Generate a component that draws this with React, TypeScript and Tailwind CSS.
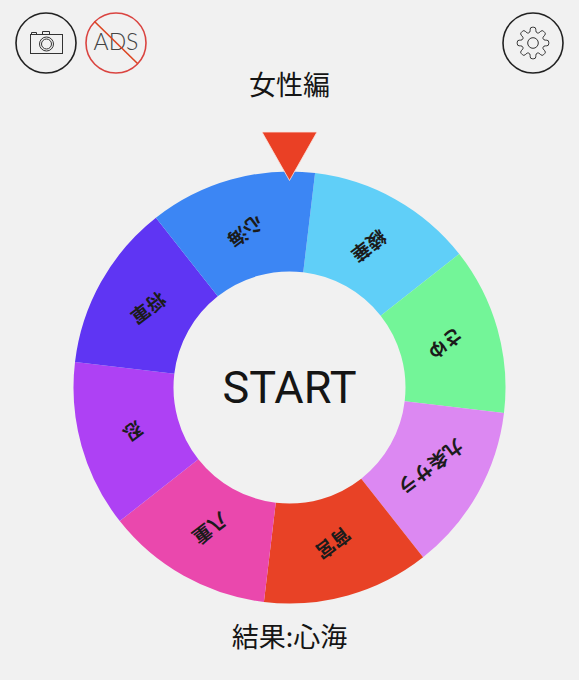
import React from "react";

type Segment = { label: string; color: string };

const SEGMENTS: Segment[] = [
  { label: "綾華", color: "#60cff8" },
  { label: "さゆ", color: "#73f598" },
  { label: "九条サラ", color: "#dc88f2" },
  { label: "宵宮", color: "#e84226" },
  { label: "八重", color: "#ea48ad" },
  { label: "忍", color: "#ae41f4" },
  { label: "将軍", color: "#5f35f3" },
  { label: "心海", color: "#3c86f4" },
];

const OUTER = 216;
const INNER = 116;
const LABEL_RADIUS = 162;
const WHEEL_TURN = 6.8;
const LABEL_TURN = 143;

// Angles are in degrees, clockwise from twelve o'clock.
function polar(radius: number, degrees: number): [number, number] {
  const a = (degrees * Math.PI) / 180;
  return [radius * Math.sin(a), -radius * Math.cos(a)];
}

function ringSlice(from: number, to: number): string {
  const [ax, ay] = polar(OUTER, from);
  const [bx, by] = polar(OUTER, to);
  const [cx, cy] = polar(INNER, to);
  const [dx, dy] = polar(INNER, from);
  return `M${ax} ${ay}A${OUTER} ${OUTER} 0 0 1 ${bx} ${by}L${cx} ${cy}A${INNER} ${INNER} 0 0 0 ${dx} ${dy}Z`;
}

function gearPath(): string {
  const points: [number, number][] = [];
  for (let i = 0; i < 8; i++) {
    const c = i * 45;
    points.push(polar(11, c - 15), polar(16, c - 10), polar(16, c + 10), polar(11, c + 15));
  }
  const toward = (p: [number, number], q: [number, number], d: number) => {
    const len = Math.hypot(q[0] - p[0], q[1] - p[1]);
    const t = Math.min(d / len, 0.5);
    return `${p[0] + (q[0] - p[0]) * t} ${p[1] + (q[1] - p[1]) * t}`;
  };
  const n = points.length;
  return (
    points
      .map((p, i) => {
        const prev = points[(i + n - 1) % n];
        const next = points[(i + 1) % n];
        return `${i === 0 ? "M" : "L"}${toward(p, prev, 2)}Q${p[0]} ${p[1]} ${toward(p, next, 2)}`;
      })
      .join("") + "Z"
  );
}

function RoundButton({ label, children }: { label: string; children: React.ReactNode }) {
  return (
    <button type="button" aria-label={label} className="size-[62px] shrink-0 cursor-pointer rounded-full">
      <svg viewBox="0 0 62 62" className="size-full" fill="none">
        {children}
      </svg>
    </button>
  );
}

function Wheel() {
  return (
    <svg viewBox="-216.5 -216.5 433 433" className="block w-full">
      {SEGMENTS.map((s, i) => (
        <path key={s.label} d={ringSlice(WHEEL_TURN + i * 45, WHEEL_TURN + (i + 1) * 45)} fill={s.color} />
      ))}
      {SEGMENTS.map((s, i) => {
        const [x, y] = polar(LABEL_RADIUS, WHEEL_TURN + i * 45 + 22.5);
        return (
          <text
            key={s.label}
            transform={`translate(${x} ${y}) rotate(${LABEL_TURN})`}
            dy={-1}
            textAnchor="middle"
            dominantBaseline="central"
            className="fill-[#1b1b1b] text-[19px] font-bold"
          >
            {s.label}
          </text>
        );
      })}
    </svg>
  );
}

export default function App() {
  return (
    <main className="min-h-screen bg-[#f1f1f1] pt-3 font-['Noto_Sans_CJK_JP',sans-serif] text-[#151515]">
      <header className="flex items-center justify-between px-[15px]">
        <div className="flex gap-2">
          <RoundButton label="カメラ">
            <circle cx="31" cy="31" r="30" stroke="#222" strokeWidth="1.6" />
            <g stroke="#333" strokeWidth="1">
              <rect x="15.5" y="22.5" width="32" height="19" />
              <path d="M16.5 22.5v-2h5v2M27.5 22.5v-3h7v3" />
              <circle cx="31.5" cy="32" r="7" />
              <circle cx="31.5" cy="32" r="5" />
            </g>
          </RoundButton>
          <RoundButton label="広告を非表示">
            <circle cx="31" cy="31" r="30" stroke="#da4440" strokeWidth="1.6" />
            <text x="31" y="38" textAnchor="middle" className="fill-[#444] font-['Lato',sans-serif] text-[23px] font-light">
              ADS
            </text>
            <path d="M9.500 9.500L52.500 51.500" stroke="#dc4420" strokeWidth="1.6" />
          </RoundButton>
        </div>
        <RoundButton label="設定">
          <circle cx="31" cy="31" r="30" stroke="#222" strokeWidth="1.6" />
          <g transform="translate(31 31)" stroke="#333" strokeWidth="1">
            <path d={gearPath()} />
            <circle r="5.300" />
          </g>
        </RoundButton>
      </header>

      <h1 className="text-center text-[27px] leading-5 font-normal">女性編</h1>

      <section className="mt-[77px] px-[73px]">
        <div className="relative">
          <Wheel />
          <svg
            viewBox="0 0 56 50"
            className="absolute -top-10 left-1/2 w-14 -translate-x-1/2"
          >
            <path d="M0 1L27.500 49.500L55 1Z" fill="#ea4025" stroke="#fbe4df" strokeWidth="0.8" />
          </svg>
          <div className="absolute inset-0 flex items-center justify-center">
            <button
              type="button"
              className="cursor-pointer rounded-full font-['Roboto',sans-serif] text-[45px] leading-none font-normal"
            >
              START
            </button>
          </div>
        </div>
      </section>

      <p className="mt-5 text-center text-[27px] leading-6">結果:心海</p>
    </main>
  );
}
